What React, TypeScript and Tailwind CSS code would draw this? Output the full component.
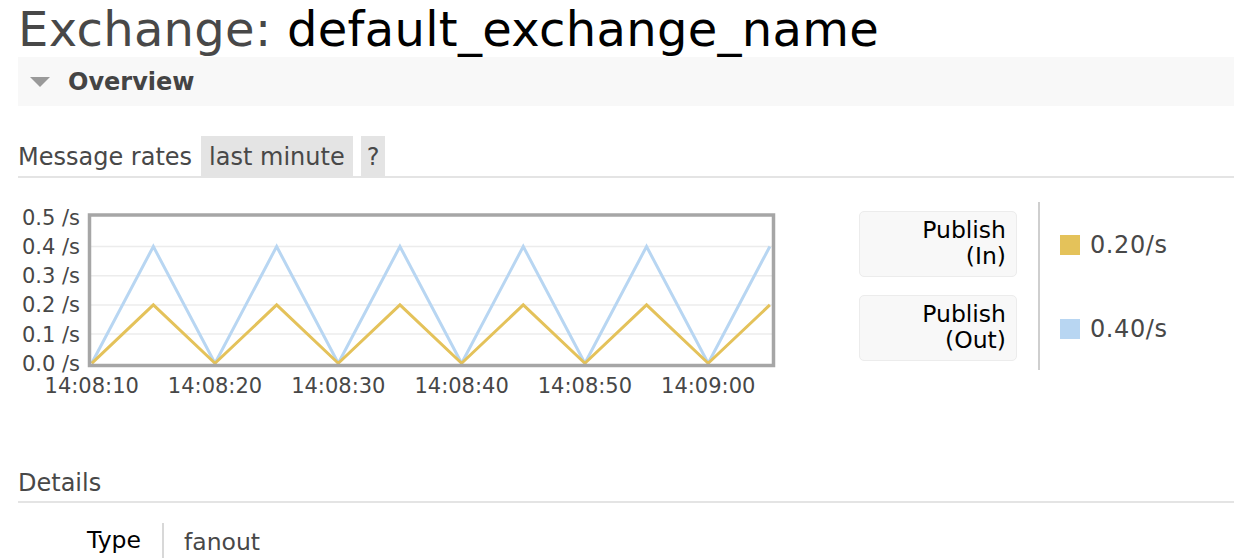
import React from 'react';

const FONT = "font-['DejaVu_Sans',Verdana,sans-serif]";

// one sample every 5s from 14:08:10, alternating zero and peak
const SERIES = [
  { color: '#e4c25a', peak: 0.2 },
  { color: '#b8d6f2', peak: 0.4 },
];

const X0 = 73.7;
const PX_PER_SEC = 12.33;
const Y0 = 163.3;
const PX_PER_UNIT = 292;

const xAt = (sec: number) => X0 + sec * PX_PER_SEC;
const yAt = (v: number) => Y0 - v * PX_PER_UNIT;

const RateChart: React.FC = () => {
  const steps = Array.from({ length: 12 }, (_, i) => i * 5);
  return (
    <svg width="770" height="205" className="block shrink-0">
      {[0.1, 0.2, 0.3, 0.4].map((v) => (
        <line key={v} x1={X0 - 1} x2={754} y1={yAt(v)} y2={yAt(v)} stroke="#ececec" strokeWidth="1.5" />
      ))}
      {SERIES.slice().reverse().map((s) => (
        <polyline
          key={s.color}
          fill="none"
          stroke={s.color}
          strokeWidth="3"
          points={steps.map((sec, i) => `${xAt(sec)},${yAt(i % 2 === 1 ? s.peak : 0)}`).join(' ')}
        />
      ))}
      <rect x="71.5" y="15" width="684" height="150.5" fill="none" stroke="#a6a6a6" strokeWidth="3.5" />
      {[0, 0.1, 0.2, 0.3, 0.4, 0.5].map((v) => (
        <text key={v} x="62" y={yAt(v) + 7.5} textAnchor="end" fontSize="21" fill="#474747" fontFamily="DejaVu Sans, Verdana, sans-serif">
          {v.toFixed(1)} /s
        </text>
      ))}
      {['14:08:10', '14:08:20', '14:08:30', '14:08:40', '14:08:50', '14:09:00'].map((t, i) => (
        <text key={t} x={xAt(i * 10)} y="193" textAnchor="middle" fontSize="21" fill="#474747" fontFamily="DejaVu Sans, Verdana, sans-serif">
          {t}
        </text>
      ))}
    </svg>
  );
};

const LegendLabel: React.FC<{ sub: string }> = ({ sub }) => (
  <div className="w-[158px] h-[66px] rounded-[5px] border border-[#ececec] bg-[#f8f8f8] pr-[10px] pt-[5px] text-right text-[23.5px] leading-[26px] text-black">
    <div>Publish</div>
    <div>{sub}</div>
  </div>
);

const LegendValue: React.FC<{ swatch: string; value: string }> = ({ swatch, value }) => (
  <div className="h-[66px] flex items-center gap-[10px]">
    <span className={`w-[20px] h-[20px] ${swatch}`} />
    <span className="text-[24px] tracking-[0.6px] text-[#484848]">{value}</span>
  </div>
);

const App: React.FC = () => {
  return (
    <div className={`${FONT} bg-white w-[1234px] h-[558px] overflow-hidden pl-[18px]`}>
      <h1 className="pt-[3px] text-[48px] leading-[53px] text-[#484848] tracking-[0.3px]">
        Exchange: <span className="text-black">default_exchange_name</span>
      </h1>

      <div className="mt-[1px] h-[49px] bg-[#f8f8f8] flex items-center">
        <span className="ml-[12px] w-0 h-0 border-l-[10px] border-r-[10px] border-t-[10px] border-l-transparent border-r-transparent border-t-[#9a9a9a]" />
        <span className="ml-[18px] text-[24px] font-bold text-[#444]">Overview</span>
      </div>

      <div className="mt-[32px] flex items-end border-b-2 border-[#e4e4e4] h-[40px]">
        <span className="text-[24px] leading-[38px] text-[#484848] pr-[9px] pt-[2px]">Message rates</span>
        <span className="bg-[#e4e4e4] text-[24px] leading-[38px] text-[#484848] px-[8px] pt-[2px]">last minute</span>
        <span className="ml-[8px] bg-[#e4e4e4] text-[24px] leading-[38px] text-[#484848] px-[6px] pt-[2px]">?</span>
      </div>

      <div className="mt-[22px] flex items-start">
        <RateChart />
        <div className="ml-[71px] mt-[11px] flex flex-col gap-[18px]">
          <LegendLabel sub="(In)" />
          <LegendLabel sub="(Out)" />
        </div>
        <div className="ml-[21px] mt-[2px] w-[2px] h-[168px] bg-[#cfcfcf]" />
        <div className="ml-[20px] mt-[12px] flex flex-col gap-[18px]">
          <LegendValue swatch="bg-[#e4c25a]" value="0.20/s" />
          <LegendValue swatch="bg-[#b8d6f2]" value="0.40/s" />
        </div>
      </div>

      <div className="mt-[60px] border-b-2 border-[#e4e4e4] h-[38px] flex items-center">
        <span className="text-[24px] text-[#484848]">Details</span>
      </div>

      <div className="mt-[20px] flex items-stretch h-[40px]">
        <span className="w-[123px] text-right text-[23.5px] leading-[34px] text-black">Type</span>
        <span className="ml-[21px] w-[2px] bg-[#d8d8d8]" />
        <span className="ml-[20px] text-[23.5px] leading-[38px] text-[#484848]">fanout</span>
      </div>
    </div>
  );
};

export default App;
